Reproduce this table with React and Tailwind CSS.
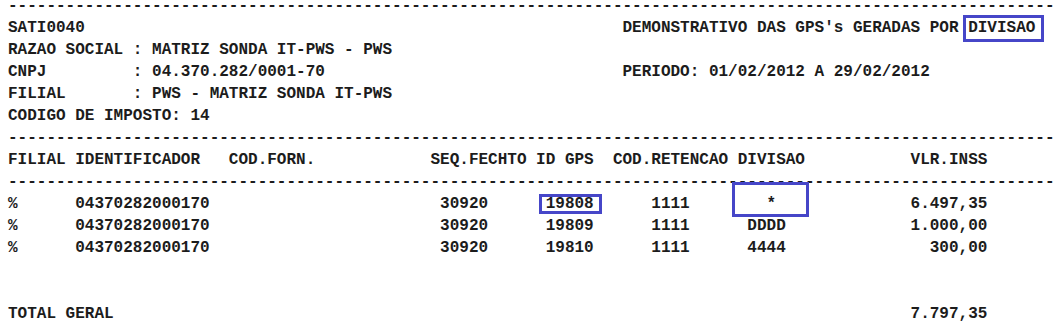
import React from 'react';

const DASHES = '-'.repeat(109);

// builds a fixed-width report line from [column, text] pairs
const cols = (parts) => {
  let s = '';
  parts.forEach(([col, text]) => {
    if (s.length < col) s += ' '.repeat(col - s.length);
    s += text;
  });
  return s;
};

const Line = ({ children, boxes = [] }) => (
  <div className="relative h-[22px] pl-[8px] whitespace-pre leading-[22px]">
    {children}
    {boxes.map((b, i) => (
      <span
        key={i}
        className="absolute border-[3px] border-[#4646c8]"
        style={{ left: b.left, top: b.top, width: b.width, height: b.height }}
      />
    ))}
  </div>
);

const rows = [
  { id: '19808', div: [79, '*'], vlr: [94, '6.497,35'] },
  { id: '19809', div: [77, 'DDDD'], vlr: [94, '1.000,00'] },
  { id: '19810', div: [77, '4444'], vlr: [96, '300,00'] },
];

export default function App() {
  return (
    <div className="w-[1054px] h-[329px] overflow-hidden bg-white text-[#1c1c1c]">
      <div className="mt-[-5px] font-['Courier_New','Liberation_Mono',monospace] text-[16px] font-bold">
        <Line>{DASHES}</Line>
        <Line boxes={[{ left: 963, top: -2, width: 81, height: 27 }]}>
          {cols([[0, 'SATI0040'], [64, "DEMONSTRATIVO DAS GPS's GERADAS POR DIVISAO"]])}
        </Line>
        <Line>RAZAO SOCIAL : MATRIZ SONDA IT-PWS - PWS</Line>
        <Line>
          {cols([[0, 'CNPJ         : 04.370.282/0001-70'], [64, 'PERIODO: 01/02/2012 A 29/02/2012']])}
        </Line>
        <Line>FILIAL       : PWS - MATRIZ SONDA IT-PWS</Line>
        <Line>CODIGO DE IMPOSTO: 14</Line>
        <Line>{DASHES}</Line>
        <Line>
          {cols([
            [0, 'FILIAL'],
            [7, 'IDENTIFICADOR'],
            [23, 'COD.FORN.'],
            [44, 'SEQ.FECHTO'],
            [55, 'ID GPS'],
            [63, 'COD.RETENCAO'],
            [76, 'DIVISAO'],
            [94, 'VLR.INSS'],
          ])}
        </Line>
        <Line>{DASHES}</Line>
        {rows.map((r, i) => (
          <Line
            key={r.id}
            boxes={
              i === 0
                ? [
                    { left: 539, top: 1, width: 63, height: 20 },
                    { left: 732, top: -11, width: 77, height: 35 },
                  ]
                : []
            }
          >
            {cols([[0, '%'], [7, '04370282000170'], [45, '30920'], [56, r.id], [67, '1111'], r.div, r.vlr])}
          </Line>
        ))}
        <Line> </Line>
        <Line> </Line>
        <Line>{cols([[0, 'TOTAL GERAL'], [94, '7.797,35']])}</Line>
      </div>
    </div>
  );
}
